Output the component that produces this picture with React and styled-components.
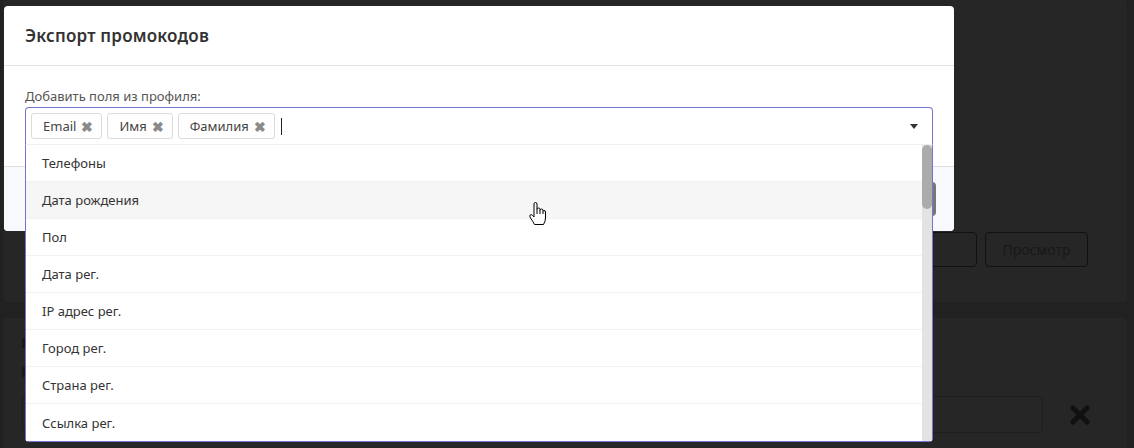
import React from 'react';
import styled, { createGlobalStyle } from 'styled-components';

const GlobalStyle = createGlobalStyle`
  html, body {
    margin: 0;
    padding: 0;
    background: #212121;
    font-family: "Noto Sans", "Open Sans", "Liberation Sans", sans-serif;
  }
  * { box-sizing: border-box; }
`;

const tags = ['Email', 'Имя', 'Фамилия'];
const options = [
  'Телефоны',
  'Дата рождения',
  'Пол',
  'Дата рег.',
  'IP адрес рег.',
  'Город рег.',
  'Страна рег.',
  'Ссылка рег.',
];

const Page = styled.div`
  position: relative;
  width: 1134px;
  height: 448px;
  overflow: hidden;
  padding: 0 7px 0 3px;
  background: #212121;
`;

const Card = styled.div`
  background: #262626;
  border-radius: 4px;
  display: flex;
  flex-direction: column;
  justify-content: ${(p) => (p.$end ? 'flex-end' : 'flex-start')};
  height: ${(p) => p.$height}px;
  margin-top: ${(p) => p.$gap || 0}px;
  padding: ${(p) => p.$pad};
`;

const ButtonRow = styled.div`
  display: flex;
  justify-content: flex-end;
  gap: 8px;
`;

const DarkButton = styled.div`
  width: ${(p) => p.$w}px;
  height: 35px;
  border: 1px solid #111;
  border-radius: 4px;
  display: flex;
  align-items: center;
  justify-content: center;
  color: #181818;
  font-size: 14px;
`;

const DarkMark = styled.div`
  width: 5px;
  height: 10px;
  margin-bottom: 19px;
  border-radius: 1px;
  background: #181818;
`;

const InputRow = styled.div`
  display: flex;
  align-items: center;
  gap: 27px;
`;

const DarkInput = styled.div`
  flex: 1;
  height: 37px;
  border: 1px solid #1e1e1e;
  border-radius: 4px;
`;

const Backdrop = styled.div`
  position: absolute;
  inset: 0;
  padding: 6px 0 0 4px;
`;

const Modal = styled.div`
  width: 950px;
  background: #fff;
  border-radius: 4px;
`;

const Header = styled.div`
  height: 60px;
  display: flex;
  align-items: center;
  padding: 0 21px;
  border-bottom: 1px solid #e2e2e2;
`;

const Title = styled.h4`
  margin: 0;
  font-size: 17px;
  font-weight: 600;
  color: #333;
  letter-spacing: 0.2px;
`;

const Body = styled.div`
  padding: 22px 21px 21px;
`;

const Label = styled.div`
  font-size: 13px;
  color: #555;
  line-height: 17px;
  margin-bottom: 2px;
`;

const Select = styled.div`
  position: relative;
`;

const Control = styled.div`
  height: 38px;
  border: 1px solid #7474d4;
  border-bottom: 1px solid #f0f0f0;
  border-radius: 4px 4px 0 0;
  display: flex;
  align-items: center;
  gap: 5px;
  padding: 0 8px 0 5px;
`;

const Tag = styled.div`
  height: 26px;
  display: flex;
  align-items: center;
  gap: 5px;
  padding: 0 8px 0 11px;
  border: 1px solid #dcdcdc;
  border-radius: 3px;
  font-size: 13px;
  color: #444;
`;

const Remove = styled.span`
  color: #8a8a8a;
  font-size: 14px;
  font-weight: 700;
`;

const Caret = styled.span`
  width: 1px;
  height: 17px;
  background: #222;
  margin-left: 1px;
`;

const Arrow = styled.span`
  margin-left: auto;
  margin-right: 6px;
  width: 0;
  height: 0;
  border-left: 4px solid transparent;
  border-right: 4px solid transparent;
  border-top: 5px solid #333;
`;

const Menu = styled.div`
  position: absolute;
  left: 0;
  right: 0;
  top: 100%;
  z-index: 5;
  background: #fff;
  border: 1px solid #7474d4;
  border-top: none;
  border-radius: 0 0 4px 4px;
  display: flex;
`;

const OptionList = styled.div`
  flex: 1;
`;

const Option = styled.div`
  height: 37px;
  display: flex;
  align-items: center;
  padding-left: 16px;
  font-size: 13px;
  color: #333;
  background: ${(p) => (p.$hover ? '#f6f6f6' : '#fff')};
  border-bottom: 1px solid #f2f2f2;
  &:last-child { border-bottom: none; }
`;

const Scrollbar = styled.div`
  width: 10px;
  background: #e3e3e3;
`;

const Thumb = styled.div`
  height: 64px;
  background: #ababab;
  border-radius: 5px;
`;

const Footer = styled.div`
  height: 65px;
  background: #f8f9fc;
  border-top: 1px solid #dedede;
  border-radius: 0 0 4px 4px;
  display: flex;
  align-items: center;
  justify-content: flex-end;
  padding-right: 18px;
`;

const FooterButton = styled.div`
  width: 90px;
  height: 34px;
  border-radius: 4px;
  background: #777;
`;

const Pointer = styled.svg`
  position: absolute;
  left: 529px;
  top: 202px;
  z-index: 10;
`;

function CloseIcon() {
  return (
    <svg width="20" height="20" viewBox="0 0 20 20">
      <path d="M3 3 L17 17 M17 3 L3 17" stroke="#111" strokeWidth="5" strokeLinecap="round" />
    </svg>
  );
}

export default function App() {
  return (
    <>
      <GlobalStyle />
      <Page>
        <Card $height={302} $end $pad="0 39px 35px 0">
          <ButtonRow>
            <DarkButton $w={110} />
            <DarkButton $w={103}>Просмотр</DarkButton>
          </ButtonRow>
        </Card>
        <Card $height={200} $gap={16} $pad="20px 37px 0 19px">
          <DarkMark />
          <DarkMark />
          <InputRow>
            <DarkInput />
            <CloseIcon />
          </InputRow>
        </Card>

        <Backdrop>
          <Modal>
            <Header>
              <Title>Экспорт промокодов</Title>
            </Header>
            <Body>
              <Label>Добавить поля из профиля:</Label>
              <Select>
                <Control>
                  {tags.map((t) => (
                    <Tag key={t}>
                      {t}
                      <Remove>✖</Remove>
                    </Tag>
                  ))}
                  <Caret />
                  <Arrow />
                </Control>
                <Menu>
                  <OptionList>
                    {options.map((o) => (
                      <Option key={o} $hover={o === 'Дата рождения'}>
                        {o}
                      </Option>
                    ))}
                  </OptionList>
                  <Scrollbar>
                    <Thumb />
                  </Scrollbar>
                </Menu>
              </Select>
            </Body>
            <Footer>
              <FooterButton />
            </Footer>
          </Modal>
        </Backdrop>

        <Pointer width="18" height="24" viewBox="0 0 18 24">
          <path
            d="M5 10 V2 Q5 0.5 6.5 0.5 Q8 0.5 8 2 V7.5 Q8 6 9.5 6 Q11 6 11 7.5 V8.5 Q11 7 12.5 7 Q14 7 14 8.5 V9.5 Q14 8.5 15 8.5 Q16.5 8.5 16.5 10 V16 Q16.5 19 14.5 22.5 H5.5 Q4 19.5 1.5 16 Q0.3 14 1.2 13 Q2.2 12 3.6 13.4 L5 15 Z"
            fill="#fff"
            stroke="#000"
            strokeWidth="1"
            strokeLinejoin="round"
          />
          <path d="M8 7.5 V12 M11 8.5 V12 M14 9.5 V12" stroke="#000" strokeWidth="1" />
        </Pointer>
      </Page>
    </>
  );
}
